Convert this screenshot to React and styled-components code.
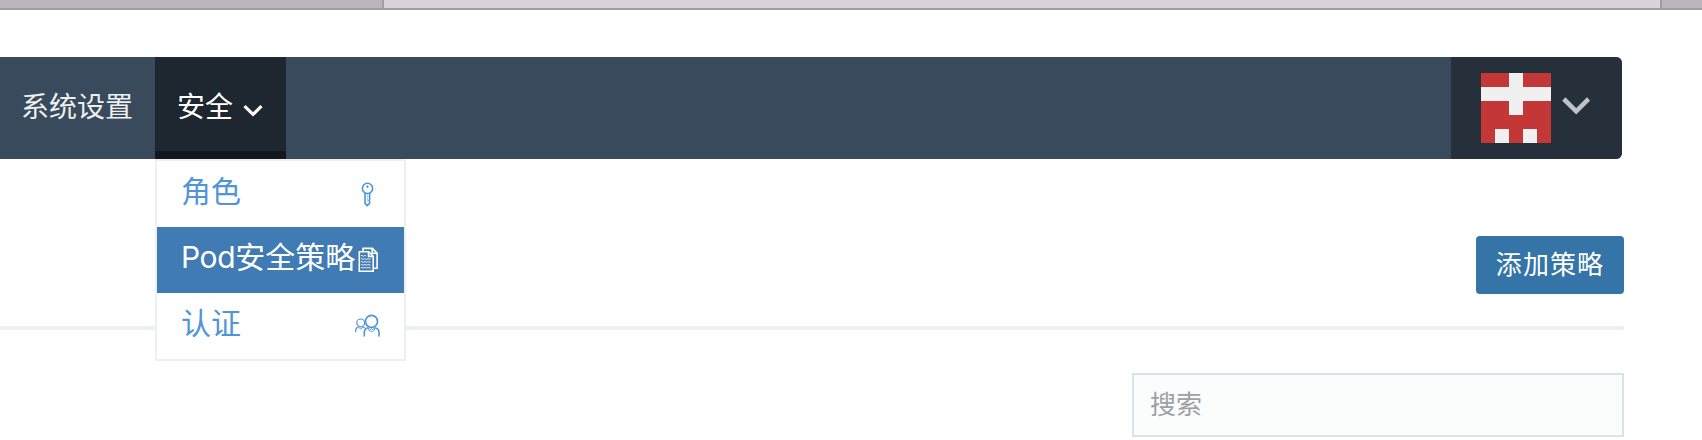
import React from "react";
import styled, { createGlobalStyle, css } from "styled-components";

const GlobalStyle = createGlobalStyle`
  *, *::before, *::after { box-sizing: border-box; }
  body {
    margin: 0;
    background: #fff;
    font-family: Inter, "Noto Sans CJK SC", sans-serif;
    overflow: hidden;
  }
`;

const Page = styled.div`
  height: 440px;
  display: flex;
  flex-direction: column;
`;

const TabStrip = styled.div`
  display: flex;
  height: 10px;
  flex-shrink: 0;
  border-bottom: 2px solid #a09ea1;
  background: #bab7ba;
`;

const BrowserTab = styled.div`
  margin-left: 382px;
  width: 1280px;
  border: solid #a09ea1;
  border-width: 0 2px;
  background: #d7d5d8;
`;

const Content = styled.main`
  width: 1624px;
  padding-top: 47px;
`;

const NavBar = styled.nav`
  display: flex;
  width: 1622px;
  height: 102px;
  border-radius: 0 6px 6px 0;
  background: #384a5b;
`;

const NavItem = styled.div`
  position: relative;
  display: flex;
  align-items: center;
  height: 102px;
  padding: 0 21px 2px;
  font-size: 28px;
  line-height: 40px;
  white-space: nowrap;
  color: #ecf0f1;
  ${(p) =>
    p.$active
      ? css`
          width: 131px;
          color: #fff;
          background: #1e2630;
          border-bottom: 8px solid #12181d;
          padding-top: 8px;
          padding-left: 22px;
        `
      : css`
          width: 155px;
        `}
`;

const NavCaret = styled.svg`
  display: block;
  flex-shrink: 0;
  width: 20px;
  height: 13px;
  margin: 7px 0 0 10px;
`;

const UserMenu = styled.div`
  display: flex;
  align-items: center;
  width: 171px;
  margin-left: auto;
  padding-left: 30px;
  border-radius: 0 6px 6px 0;
  background: #26303b;
`;

const Avatar = styled.svg`
  display: block;
  width: 70px;
  height: 70px;
`;

const UserCaret = styled.svg`
  display: block;
  width: 28px;
  height: 18px;
  margin: -4px 0 0 11px;
`;

const Dropdown = styled.div`
  position: absolute;
  z-index: 2;
  top: 102px;
  left: 0;
  width: 251px;
  border: 2px solid #ecf0f1;
  background: #fff;
`;

const MenuItem = styled.div`
  display: flex;
  align-items: center;
  justify-content: space-between;
  height: 66px;
  padding: 0 24px;
  color: ${(p) => (p.$selected ? "#fff" : "#4f95d7")};
  background: ${(p) => (p.$selected ? "#407bb3" : "transparent")};
`;

const MenuLabel = styled.span`
  flex: 0 0 173px;
  font-size: 30px;
  line-height: 44px;
  margin-top: -6px;
`;

const Latin = styled.span`
  letter-spacing: -0.4px;
`;

const MenuIcon = styled.svg`
  display: block;
  flex-shrink: 0;
  width: 26px;
  height: 26px;
  fill: none;
  stroke: currentColor;
  stroke-width: 1.6;
`;

const PageHeader = styled.header`
  display: flex;
  justify-content: flex-end;
  height: 171px;
  padding-top: 77px;
  border-bottom: 4px solid #ecf0f1;
`;

const AddButton = styled.button`
  width: 148px;
  height: 58px;
  padding: 0 0 1px;
  border: 0;
  border-radius: 4px;
  font-family: inherit;
  font-size: 26px;
  letter-spacing: 1.1px;
  line-height: 38px;
  color: #fff;
  background: #3474a6;
`;

const SearchRow = styled.div`
  display: flex;
  justify-content: flex-end;
  padding-top: 43px;
`;

const SearchInput = styled.input`
  width: 492px;
  height: 64px;
  padding: 0 16px 2px;
  border: 2px solid #dce1e5;
  border-radius: 0;
  font-family: inherit;
  font-size: 26px;
  background: #fbfdfc;
  &::placeholder {
    color: #9ba1a7;
    opacity: 1;
  }
`;

const KeyIcon = () => (
  <MenuIcon viewBox="0 0 26 26">
    <circle cx="13.5" cy="7.4" r="5.1" />
    <path d="M13.5 4.4v2.6M12.2 5.7h2.6" strokeWidth="1" />
    <path d="M11 12v10.4l2.2 2.2 2.4-2.2v-2l-.5-.8.5-.8V12" />
    <path d="M13.3 13v7.5" strokeWidth="0.5" />
  </MenuIcon>
);

const DocumentsIcon = () => (
  <MenuIcon viewBox="0 0 26 26">
    <path d="M4.3 4.7h9.4l4.5 4.6v15H4.3z" />
    <path d="M13.5 4.8v4.6h4.6" />
    <path d="M8 4V1.4h9.3l4.8 4.7v15.2h-3.3" />
    <path d="M17.2 1.6v4.7h4.8" />
    <path
      d="M6 8.8q.8-.8 1.6 0t1.6 0t1.6 0M6 12q.8-.8 1.6 0t1.6 0t1.6 0t1.6 0t1.6 0t1.6 0M6 14.9q.8-.8 1.6 0t1.6 0t1.6 0t1.6 0t1.6 0t1.6 0M6 17.8q.8-.8 1.6 0t1.6 0t1.6 0t1.6 0t1.6 0t1.6 0M6 20.7q.8-.8 1.6 0t1.6 0t1.6 0t1.6 0t1.6 0t1.6 0"
      strokeWidth="1"
    />
  </MenuIcon>
);

const UsersIcon = () => (
  <MenuIcon viewBox="0 0 26 26">
    <circle cx="17.5" cy="8.4" r="6" />
    <circle cx="6.7" cy="9.9" r="3.9" strokeWidth="1.2" />
    <path d="M10.3 23.5v-4.2q0-3.7 3.9-4.6M20.8 14.7q4.2.9 4.2 4.6v4.2" />
    <path d="M1.7 19.2v-1.7q0-2.7 2.8-3.4M8.9 14.1l1.7.8" strokeWidth="1.2" />
    <path d="M14.2 14.7q0 3.8 3.4 3.8t3.3-3.8M15.2 15.3l1.3 1.4 1.1-1.3 1.1 1.3 1.3-1.4M4.8 14.2l1.9 2 2-2" strokeWidth="0.9" />
  </MenuIcon>
);

const securityMenu = [
  { label: "角色", Icon: KeyIcon },
  { prefix: "Pod", label: "安全策略", Icon: DocumentsIcon, selected: true },
  { label: "认证", Icon: UsersIcon },
];

export default function App() {
  return (
    <Page>
      <GlobalStyle />
      <TabStrip>
        <BrowserTab />
      </TabStrip>
      <Content>
        <NavBar>
          <NavItem>系统设置</NavItem>
          <NavItem $active>
            安全
            <NavCaret viewBox="0 0 20 13">
              <path d="M1.5 2.2 10 10.4l8.5-8.2" fill="none" stroke="#fff" strokeWidth="3.2" />
            </NavCaret>
            <Dropdown>
              {securityMenu.map(({ prefix, label, Icon, selected }) => (
                <MenuItem key={label} $selected={selected}>
                  <MenuLabel>
                    {prefix && <Latin>{prefix}</Latin>}
                    {label}
                  </MenuLabel>
                  <Icon />
                </MenuItem>
              ))}
            </Dropdown>
          </NavItem>
          <UserMenu>
            <Avatar viewBox="0 0 5 5" shapeRendering="crispEdges">
              <path d="M0 0h5v5H0z" fill="#c43737" />
              <path d="M2 0h1v1h2v1H3v1H2V2H0V1h2zM1 4h1v1H1zM3 4h1v1H3z" fill="#f0f0f0" />
            </Avatar>
            <UserCaret viewBox="0 0 28 18">
              <path d="M1.8 2 14.2 14.3 26.6 2" fill="none" stroke="#bdc3c7" strokeWidth="4.6" />
            </UserCaret>
          </UserMenu>
        </NavBar>
        <PageHeader>
          <AddButton>添加策略</AddButton>
        </PageHeader>
        <SearchRow>
          <SearchInput placeholder="搜索" />
        </SearchRow>
      </Content>
    </Page>
  );
}
